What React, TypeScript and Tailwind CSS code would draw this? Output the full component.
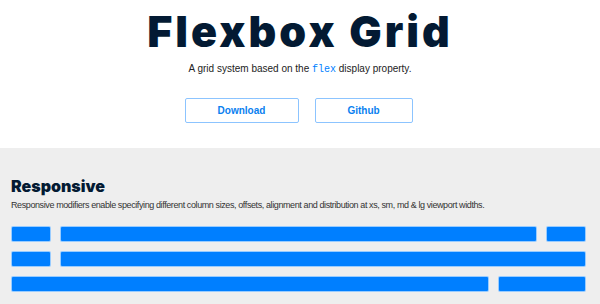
const rows: number[][] = [
  [1, 10, 1],
  [1, 11],
  [10, 2],
];

const span: Record<number, string> = {
  1: 'col-span-1',
  2: 'col-span-2',
  10: 'col-span-10',
  11: 'col-span-11',
};

export default function App() {
  return (
    <div className="h-[304px] w-[600px] overflow-hidden bg-white font-['Liberation_Sans',Arial,sans-serif]">
      <header className="flex flex-col items-center pt-[10px]">
        <h1 className="font-['Inter',sans-serif] text-[43px] leading-[43px] font-black tracking-[3px] text-[#031a33]">
          Flexbox Grid
        </h1>
        <p className="mt-[10px] text-[10px] leading-[12px] text-[#222]">
          A grid system based on the{' '}
          <code className="font-['Liberation_Mono',monospace] text-[10px] text-[#007fff]">flex</code>{' '}
          display property.
        </p>
        <div className="mt-[22px] flex gap-4 pr-[3px]">
          <a className="flex h-[25px] w-[114px] items-center justify-center rounded-[2px] border border-[#8cc4ff] text-[10px] font-bold text-[#0a7ff0]">
            Download
          </a>
          <a className="flex h-[25px] w-[98px] items-center justify-center rounded-[2px] border border-[#8cc4ff] text-[10px] font-bold text-[#0a7ff0]">
            Github
          </a>
        </div>
      </header>

      <section className="mt-[25px] h-full bg-[#eeeeee] pt-[28px] pr-[14px] pl-[11px]">
        <h2 className="font-['Inter',sans-serif] text-[16px] leading-[20px] font-black text-[#031a33]">
          Responsive
        </h2>
        <p className="mt-[4px] text-[9px] leading-[11px] tracking-[-0.4px] text-[#333]">
          Responsive modifiers enable specifying different column sizes, offsets, alignment and distribution at xs, sm, md &amp; lg viewport widths.
        </p>
        <div className="mt-[15px] grid grid-cols-12 gap-[9px]">
          {rows.map((r, i) =>
            r.map((n, j) => (
              <div
                key={`${i}-${j}`}
                className={`${span[n]} h-4 rounded-[2px] border border-white/60 bg-[#007fff]`}
              />
            ))
          )}
        </div>
      </section>
    </div>
  );
}
